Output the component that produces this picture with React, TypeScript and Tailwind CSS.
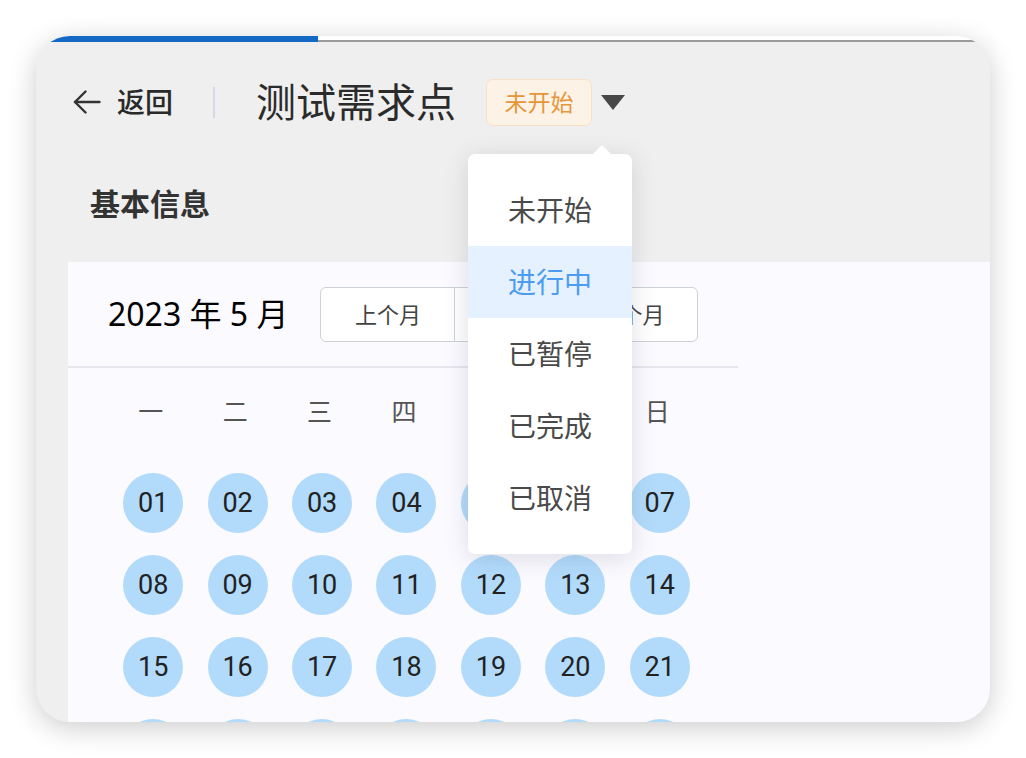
const CJK = "font-['Noto_Sans','Noto_Sans_CJK_SC',sans-serif]";

const WEEK = ["一", "二", "三", "四", "五", "六", "日"];
const STATUS = ["未开始", "进行中", "已暂停", "已完成", "已取消"];
const DAYS = Array.from({ length: 28 }, (_, i) => String(i + 1).padStart(2, "0"));

function BackArrow() {
  return (
    <svg width="28" height="24" viewBox="0 0 28 24" fill="none" stroke="#333" strokeWidth="2.4" strokeLinecap="round" strokeLinejoin="round">
      <path d="M26.5 12H2" />
      <path d="M12.5 1.5 2 12l10.5 10.5" />
    </svg>
  );
}

function StatusMenu() {
  return (
    <div className="absolute left-[432px] top-[118px] w-[164px]">
      <div className="absolute right-[20px] -top-[9px] h-0 w-0 border-x-[10px] border-b-[10px] border-x-transparent border-b-white" />
      <div className="rounded-[7px] bg-white py-[20px] shadow-[0_4px_24px_rgba(60,60,90,0.16)]">
        {STATUS.map((s, i) => (
          <div
            key={s}
            className={`flex h-[72px] items-center justify-center text-[28px] ${
              i === 1 ? "bg-[#e5f1fe] text-[#4c9cf2]" : "text-[#4a4a4a]"
            }`}
          >
            {s}
          </div>
        ))}
      </div>
    </div>
  );
}

export default function App() {
  return (
    <div className={`min-h-[758px] bg-white p-[36px] ${CJK}`}>
      <div className="relative flex h-[686px] w-[954px] flex-col overflow-hidden rounded-[34px] bg-[#efefef] shadow-[0_6px_28px_rgba(0,0,0,0.2)]">
        {/* progress */}
        <div className="flex h-[6px] shrink-0">
          <div className="w-[282px] bg-[#1469c4]" />
          <div className="flex-1 border-b-2 border-[#9b9b9b] bg-white" />
        </div>

        {/* header */}
        <div className="flex h-[120px] shrink-0 items-center pl-[37px]">
          <BackArrow />
          <span className="ml-[16px] text-[28px] font-medium text-[#2a2a2a]">返回</span>
          <div className="ml-[40px] h-[31px] w-[2px] bg-[#d5d9e2]" />
          <h1 className="ml-[41px] text-[40px] font-normal leading-none text-[#2b2b2b]">测试需求点</h1>
          <span className="ml-[30px] flex h-[47px] w-[106px] items-center justify-center rounded-[7px] border-[1.5px] border-[#f8e0c2] bg-[#fdf2e6] text-[23px] text-[#e6963a]">
            未开始
          </span>
          <svg className="ml-[9px]" width="24" height="15" viewBox="0 0 24 15">
            <polygon points="0,0 24,0 12,15" fill="#484848" />
          </svg>
        </div>

        {/* section title */}
        <div className="h-[100px] shrink-0 pl-[54px] pt-[27px]">
          <h2 className="text-[30px] font-bold leading-[30px] text-[#333]">基本信息</h2>
        </div>

        {/* calendar */}
        <div className="ml-[32px] flex-1 bg-[#fbfaff]">
          <div className="flex h-[106px] w-[670px] items-center border-b-2 border-[#e6e6ee] pl-[40px]">
            <span className="text-[32px] text-black">2023 年 5 月</span>
            <div className="ml-[32px] flex h-[55px] overflow-hidden rounded-[6px] border-[1.5px] border-[#cdd1d9] bg-white text-[22px] text-[#444]">
              <div className="flex w-[134px] items-center justify-center border-r-[1.5px] border-[#cdd1d9]">上个月</div>
              <div className="flex w-[110px] items-center justify-center border-r-[1.5px] border-[#cdd1d9]">今天</div>
              <div className="flex w-[132px] items-center justify-center">下个月</div>
            </div>
          </div>

          <div className="ml-[43px] w-[591px]">
            <div className="grid h-[88px] grid-cols-7 items-center">
              {WEEK.map((w) => (
                <span key={w} className="pr-[5px] text-center text-[25px] text-[#555]">
                  {w}
                </span>
              ))}
            </div>
            <div className="grid grid-cols-7 pt-[6px]">
              {DAYS.map((d) => (
                <div key={d} className="flex h-[82px] items-center justify-center">
                  <span className="flex h-[60px] w-[60px] items-center justify-center rounded-full bg-[#b2dbfb] font-['Roboto',sans-serif] text-[27px] text-[#222]">
                    {d}
                  </span>
                </div>
              ))}
            </div>
          </div>
        </div>

        <StatusMenu />
      </div>
    </div>
  );
}
